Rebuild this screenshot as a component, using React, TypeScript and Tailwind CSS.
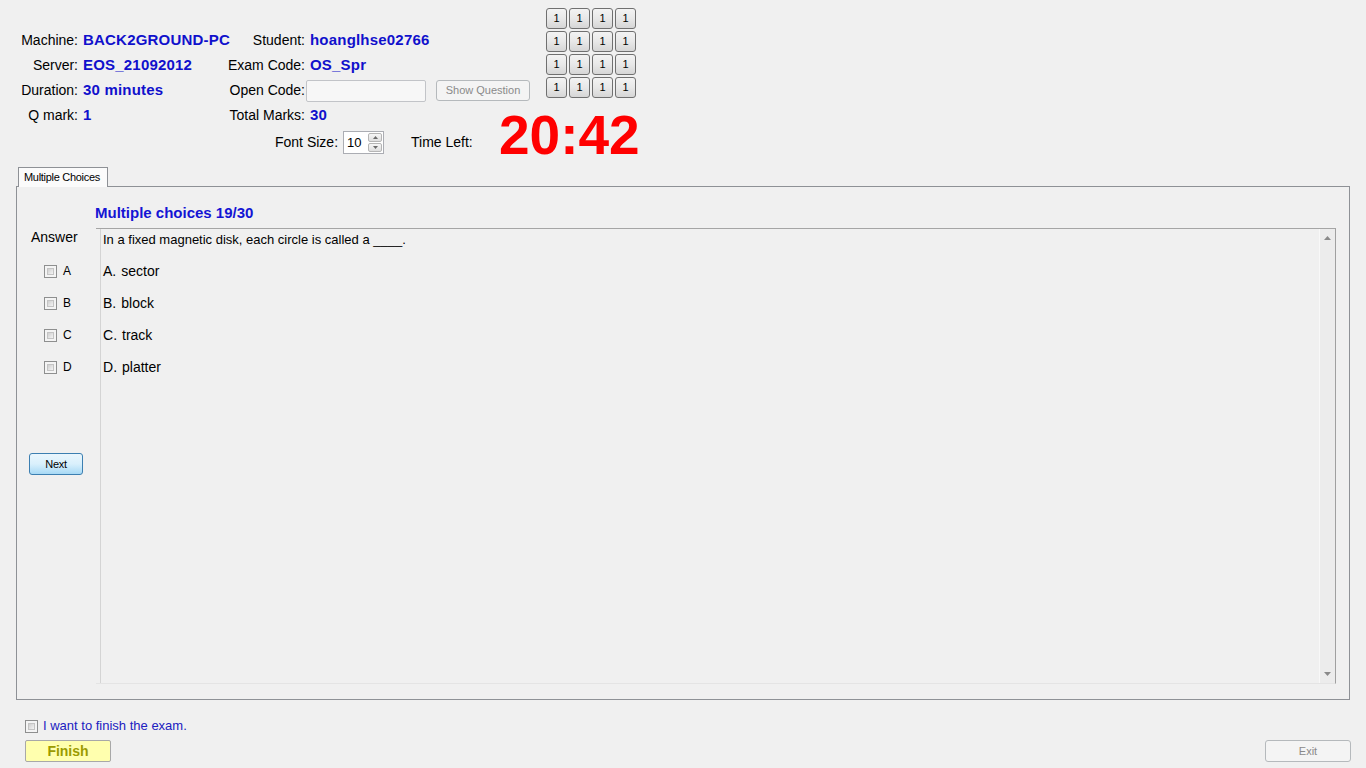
import React from "react";

const font = { fontFamily: '"Liberation Sans", Arial, sans-serif' };

function Box() {
  return (
    <span className="inline-flex w-[13px] h-[13px] shrink-0 border border-[#8e8f8f] bg-[#f4f4f4] p-[2px]">
      <span className="flex-1 border border-[#c4c4c4] bg-gradient-to-br from-[#cfcfcf] to-[#f4f4f4]" />
    </span>
  );
}

function NumBtn() {
  return (
    <button className="w-[21px] h-[21px] rounded-[3px] border border-[#707070] bg-gradient-to-b from-[#f3f3f3] via-[#e8e8e8] to-[#d6d6d6] text-[11px] leading-none text-black flex items-center justify-center">
      1
    </button>
  );
}

function Label({ children }: { children: React.ReactNode }) {
  return <div className="text-right text-[14px] text-black whitespace-nowrap">{children}</div>;
}

function Value({ children }: { children: React.ReactNode }) {
  return <div className="pl-[5px] text-[15px] font-bold text-[#1010cc] whitespace-nowrap tracking-[0.2px]">{children}</div>;
}

export default function App() {
  const options = [
    ["A", "sector"],
    ["B", "block"],
    ["C", "track"],
    ["D", "platter"],
  ];

  return (
    <div className="w-[1366px] h-[768px] bg-[#f0f0f0] overflow-hidden flex flex-col" style={font}>
      {/* header */}
      <div className="flex items-start h-[163px]">
        <div className="w-[499px] shrink-0 pt-[28px]">
          <div className="grid grid-cols-[78px_147px_80px_auto] auto-rows-[25px] items-center">
            <Label>Machine:</Label>
            <Value>BACK2GROUND-PC</Value>
            <Label>Student:</Label>
            <Value>hoanglhse02766</Value>

            <Label>Server:</Label>
            <Value>EOS_21092012</Value>
            <Label>Exam Code:</Label>
            <Value>OS_Spr</Value>

            <Label>Duration:</Label>
            <Value>30 minutes</Value>
            <Label>Open Code:</Label>
            <div className="flex items-center pl-[1px]">
              <div className="w-[120px] h-[22px] border border-[#c2c4c8] rounded-[2px] bg-[#f7f7f7]" />
              <button className="ml-[10px] w-[94px] h-[21px] rounded-[3px] border border-[#b5b9bc] bg-[#f4f4f4] text-[11px] text-[#8a8a8a] whitespace-nowrap">
                Show Question
              </button>
            </div>

            <Label>Q mark:</Label>
            <Value>1</Value>
            <Label>Total Marks:</Label>
            <Value>30</Value>
          </div>

          <div className="flex items-center mt-[3px] h-[23px]">
            <span className="ml-[275px] text-[14px]">Font Size:</span>
            <div className="ml-[5px] w-[41px] h-[23px] border border-[#abadb3] bg-white flex items-center">
              <span className="pl-[3px] text-[13px] flex-1">10</span>
              <div className="w-[15px] h-full flex flex-col gap-[1px] py-[1px] pr-[1px]">
                <div className="flex-1 border border-[#b5b5b5] rounded-[2px] bg-gradient-to-b from-[#f6f6f6] to-[#dedede] flex items-center justify-center">
                  <svg width="5" height="3" viewBox="0 0 5 3"><path d="M0 3 L2.5 0 L5 3 Z" fill="#6a6a6a" /></svg>
                </div>
                <div className="flex-1 border border-[#b5b5b5] rounded-[2px] bg-gradient-to-b from-[#f6f6f6] to-[#dedede] flex items-center justify-center">
                  <svg width="5" height="3" viewBox="0 0 5 3"><path d="M0 0 L2.5 3 L5 0 Z" fill="#6a6a6a" /></svg>
                </div>
              </div>
            </div>
            <span className="ml-[27px] text-[14px]">Time Left:</span>
          </div>
        </div>

        <div className="flex flex-col">
          <div className="ml-[47px] mt-[8px] grid grid-cols-4 gap-[2px] w-[90px]">
            {Array.from({ length: 16 }).map((_, i) => (
              <NumBtn key={i} />
            ))}
          </div>
          <div className="mt-[10px] text-[55px] leading-none font-bold text-[#ff0000]">20:42</div>
        </div>
      </div>

      {/* tab */}
      <div className="mt-[4px] ml-[18px] w-[90px] h-[20px] border border-b-0 border-[#8e9196] bg-[#fbfbfb] text-[11px] tracking-[-0.3px] flex items-center pl-[5px] pb-[1px] relative z-10 -mb-px">
        Multiple Choices
      </div>
      <div className="ml-[16px] w-[1334px] h-[514px] border border-[#8e9196] flex flex-col">
        <div className="pl-[78px] pt-[17px] text-[15px] font-bold text-[#1414d4] leading-[17px]">
          Multiple choices 19/30
        </div>
        <div className="flex mt-[7px] h-[456px]">
          <div className="w-[83px] shrink-0 flex flex-col">
            <div className="pl-[14px] pt-[1px] text-[14px] leading-[16px]">Answer</div>
            <div className="mt-[10px] flex flex-col">
              {options.map(([k]) => (
                <div key={k} className="h-[32px] flex items-center pl-[27px]">
                  <Box />
                  <span className="ml-[6px] text-[12px]">{k}</span>
                </div>
              ))}
            </div>
            <button className="mt-[70px] ml-[12px] w-[54px] h-[22px] rounded-[3px] border border-[#3c7fb1] bg-gradient-to-b from-[#eaf6fd] via-[#d9f0fc] to-[#a7d9f5] text-[11px] tracking-[-0.3px]">
              Next
            </button>
          </div>

          <div className="flex-1 mr-[13px] flex border-t border-t-[#a5a5a5] border-b border-b-[#e4e4e4] border-r border-r-[#a0a0a0] -ml-[4px] pl-[4px]">
            <div className="flex-1 flex flex-col pl-[2px] border-l border-l-[#d4d4d4]">
              <div className="mt-[3px] text-[13px] leading-[15px]">
                In a fixed magnetic disk, each circle is called a ____.
              </div>
              <div className="mt-[8px] flex flex-col">
                {options.map(([k, v]) => (
                  <div key={k} className="h-[32px] flex items-center text-[14px]">
                    <span>{k}.</span>
                    <span className="ml-[5px]">{v}</span>
                  </div>
                ))}
              </div>
            </div>
            <div className="w-[16px] flex flex-col items-center justify-between py-[7px] bg-[#ececec] border-l border-[#f8f8f8]">
              <svg width="7" height="4" viewBox="0 0 7 4"><path d="M0 4 L3.5 0 L7 4 Z" fill="#8a8a8a" /></svg>
              <svg width="7" height="4" viewBox="0 0 7 4"><path d="M0 0 L3.5 4 L7 0 Z" fill="#8a8a8a" /></svg>
            </div>
          </div>
        </div>
      </div>

      {/* bottom */}
      <div className="flex justify-between items-end">
        <div className="pl-[25px] flex flex-col">
          <div className="mt-[18px] h-[16px] flex items-center">
            <Box />
            <span className="ml-[5px] text-[13px] text-[#2020c0]">I want to finish the exam.</span>
          </div>
          <button className="mt-[6px] w-[86px] h-[22px] rounded-[2px] border border-[#a8a8a8] bg-[#ffffae] text-[14px] font-bold text-[#9b9b00]">
            Finish
          </button>
        </div>
        <button className="mr-[15px] w-[86px] h-[22px] rounded-[3px] border border-[#b5b9bc] bg-[#f4f4f4] text-[11px] text-[#8a8a8a]">
          Exit
        </button>
      </div>
    </div>
  );
}
